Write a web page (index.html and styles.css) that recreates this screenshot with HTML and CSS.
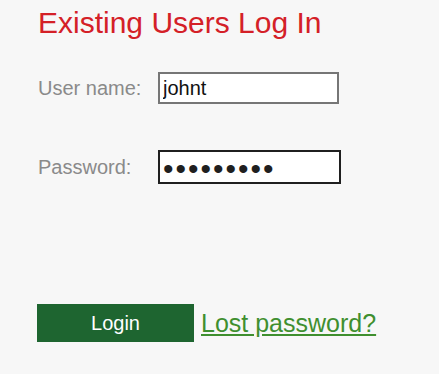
FILE: index.html
```html
<!DOCTYPE html>
<html>
<head>
<meta charset="utf-8">
<link rel="stylesheet" href="styles.css">
</head>
<body>
<div class="page">
  <h1 class="title">Existing Users Log In</h1>
  <form class="login-form">
    <div class="row">
      <label class="label" for="user">User name:</label>
      <input class="field field-user" id="user" type="text" value="johnt">
    </div>
    <div class="row">
      <label class="label" for="pass">Password:</label>
      <input class="field field-pass" id="pass" type="password" value="secret123">
    </div>
    <div class="actions">
      <button class="btn-login" type="button">Login</button>
      <a class="lost-link" href="#">Lost password?</a>
    </div>
  </form>
</div>
</body>
</html>
```
FILE: styles.css
```css
html, body {
  margin: 0;
  padding: 0;
  background: #f7f7f7;
}
body {
  font-family: "Liberation Sans", Arial, sans-serif;
}
.page {
  padding: 6px 0 0 38px;
}
.title {
  margin: 0;
  font-size: 30px;
  font-weight: normal;
  line-height: 34px;
  color: #d42027;
}
.login-form {
  margin-top: 32px;
}
.row {
  display: flex;
  align-items: center;
  margin-bottom: 46px;
}
.label {
  width: 120px;
  font-size: 20px;
  line-height: 23px;
  color: #8a8a8a;
}
.field {
  box-sizing: border-box;
  margin: 0;
  padding: 0 0 0 3px;
  font-family: "Liberation Sans", Arial, sans-serif;
  font-size: 20px;
  color: #111;
  background: #fff;
  outline: none;
}
.field-user {
  width: 181px;
  height: 32px;
  border: 2px solid #767676;
}
.field-pass {
  width: 183px;
  height: 34px;
  border: 2px solid #1f1f1f;
  padding: 3px 0 0 3px;
  font-size: 30px;
  letter-spacing: 2px;
  color: #1f1f1f;
}
.actions {
  display: flex;
  align-items: center;
  margin-top: 120px;
  margin-left: -1px;
}
.btn-login {
  width: 157px;
  height: 38px;
  margin: 0 7px 0 0;
  border: none;
  background: #1e6530;
  color: #fff;
  font-family: "Liberation Sans", Arial, sans-serif;
  font-size: 20px;
  padding: 0;
}
.lost-link {
  font-size: 25px;
  line-height: 29px;
  color: #3f8f2f;
  text-decoration: underline;
}
```
